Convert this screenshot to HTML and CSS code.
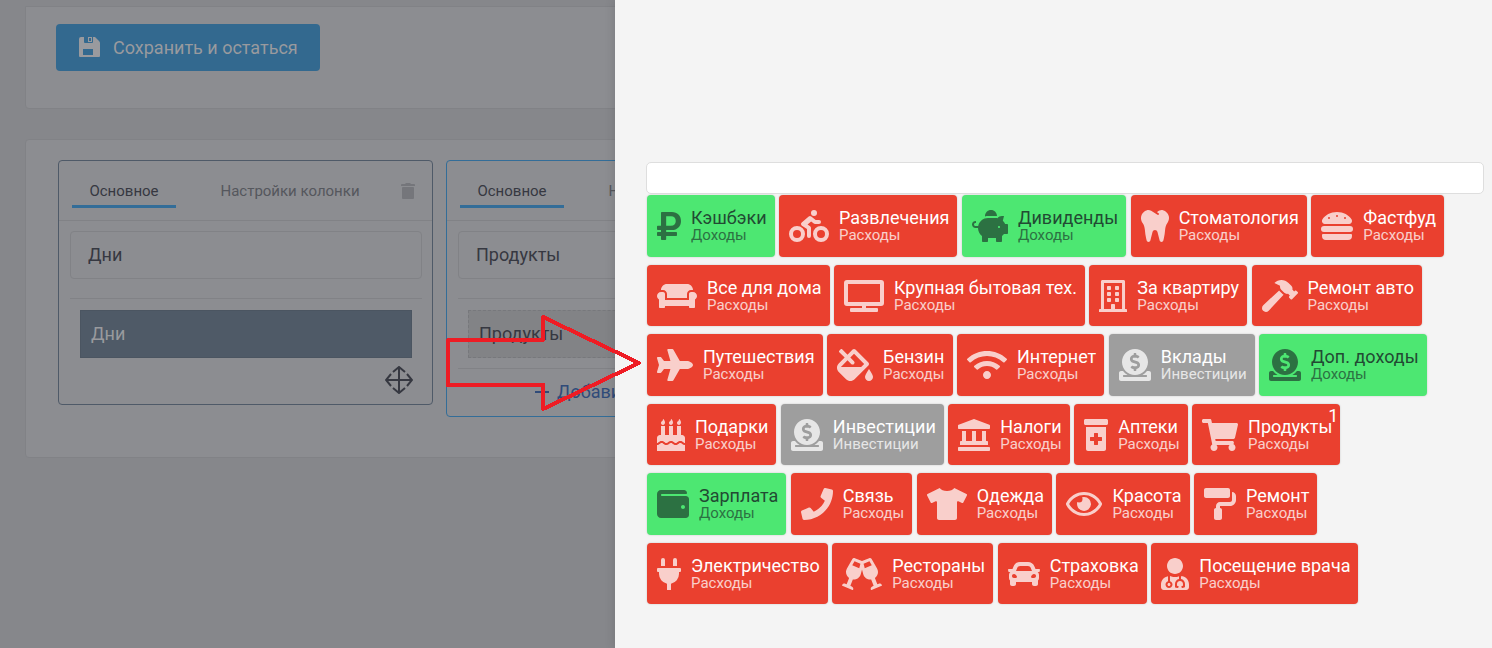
FILE: index.html
```html
<!DOCTYPE html>
<html lang="ru">
<head>
<meta charset="utf-8">
<meta name="viewport" content="width=device-width, initial-scale=1">
<title>Настройки</title>
<link rel="stylesheet" href="styles.css">
</head>
<body>
<main class="page">
  <section class="card card-actions">
    <button type="button" class="save">
      <svg class="save-icon" viewBox="0 0 21 21" aria-hidden="true"><path fill-rule="evenodd" d="M2 0h3v5q0 1 1 1h7q1 0 1-1V0h2l4 4q1 1 1 2v13q0 1-1 1H1q-1 0-1-1V2Q0 0 2 0zM4 12v6h10v-6zM9 0h4v5H9zM10 1v3h2V1z"/></svg>
      Сохранить и остаться
    </button>
  </section>

  <section class="card board">
    <article class="column">
      <div class="tabs">
        <button type="button" class="tab tab-active">Основное</button>
        <button type="button" class="tab tab-wide">Настройки колонки</button>
        <button type="button" class="trash" aria-label="Удалить"><svg viewBox="0 0 14 16" aria-hidden="true"><path d="M0 2q0-1 1-1h3l1-1h4l1 1h3q1 0 1 1v1H0zM2 4h10q1 0 1 1v10q0 1-1 1H2q-1 0-1-1V5q0-1 1-1z"/></svg></button>
      </div>
      <div class="column-body">
        <input class="name" type="text" value="Дни" aria-label="Название колонки">
        <div class="items"><div class="item item-dark">Дни</div></div>
        <div class="mover"><svg viewBox="0 0 28 28" aria-hidden="true"><path d="M14 1v26M1 14h26M8 6l6-5 6 5M8 22l6 5 6-5M6 8l-5 6 5 6M22 8l5 6-5 6"/></svg></div>
      </div>
    </article>
    <article class="column column-blue">
      <div class="tabs">
        <button type="button" class="tab tab-active">Основное</button>
        <button type="button" class="tab tab-wide">Настройки колонки</button>
      </div>
      <div class="column-body">
        <input class="name" type="text" value="Продукты" aria-label="Название колонки">
        <div class="items"><div class="item item-light">Продукты</div></div>
        <button type="button" class="add"><svg viewBox="0 0 14 14" aria-hidden="true"><path d="M7 0v14M0 7h14"/></svg>Добавить</button>
      </div>
    </article>
  </section>
</main>

<aside class="drawer">
  <input class="search" type="text" aria-label="Поиск">
  <div class="tiles">
    <button type="button" class="tile income"><svg viewBox="0 0 384 512" width="24" height="32"><path d="M239.36 320C324.48 320 384 260.542 384 175.071S324.48 32 239.36 32H76c-6.627 0-12 5.373-12 12v206.632H12c-6.627 0-12 5.373-12 12V308c0 6.627 5.373 12 12 12h52v32H12c-6.627 0-12 5.373-12 12v40c0 6.627 5.373 12 12 12h52v52c0 6.627 5.373 12 12 12h58.56c6.627 0 12-5.373 12-12v-52H308c6.627 0 12-5.373 12-12v-40c0-6.627-5.373-12-12-12H146.56v-32h92.8zm-92.8-219.252h78.72c46.72 0 74.88 29.11 74.88 74.323 0 45.832-28.16 75.561-76.16 75.561h-77.44V100.748z"/></svg><span class="label"><span class="title">Кэшбэки</span><span class="kind">Доходы</span></span></button>
    <button type="button" class="tile"><svg viewBox="0 0 640 512" width="40" height="32"><path d="M400 96a48 48 0 1 0-48-48 48 48 0 0 0 48 48zm-4 121a31.9 31.9 0 0 0 20 7h64a32 32 0 0 0 0-64h-52.78L356 103a31.94 31.94 0 0 0-40.81.68l-112 96a32 32 0 0 0 3.08 50.92L288 305.12V416a32 32 0 0 0 64 0V288a32 32 0 0 0-14.25-26.62l-41.36-27.57 58.25-49.92zm116 39a128 128 0 1 0 128 128 128 128 0 0 0-128-128zm0 192a64 64 0 1 1 64-64 64 64 0 0 1-64 64zM128 256a128 128 0 1 0 128 128 128 128 0 0 0-128-128zm0 192a64 64 0 1 1 64-64 64 64 0 0 1-64 64z"/></svg><span class="label"><span class="title">Развлечения</span><span class="kind">Расходы</span></span></button>
    <button type="button" class="tile income"><svg viewBox="0 0 576 512" width="36" height="32"><path d="M560 224h-29.5c-8.8-20-21.6-37.7-37.4-52.5L512 96h-32c-29.4 0-55.4 13.5-73 34.3-7.6-1.1-15.1-2.3-23-2.3H256c-77.4 0-141.9 55-156.8 128H56c-14.8 0-26.5-13.5-23.5-28.8C34.7 215.8 45.4 208 57 208h1c3.3 0 6-2.7 6-6v-20c0-3.3-2.7-6-6-6-28.5 0-53.9 20.4-57.5 48.6C-3.9 258.8 22.7 288 56 288h40c0 52.2 25.4 98.1 64 127.3V496c0 8.8 7.2 16 16 16h64c8.8 0 16-7.2 16-16v-48h128v48c0 8.8 7.2 16 16 16h64c8.8 0 16-7.2 16-16v-80.7c11.8-8.9 22.3-19.4 31.3-31.3H560c8.8 0 16-7.2 16-16V240c0-8.8-7.2-16-16-16zm-128 64c-8.8 0-16-7.2-16-16s7.2-16 16-16 16 7.2 16 16-7.2 16-16 16zM256 96h128c5.4 0 10.7.4 15.9.8 0-.3.1-.5.1-.8 0-53-43-96-96-96s-96 43-96 96c0 2.1.5 4.1.6 6.2 15.2-3.9 31-6.2 47.4-6.2z"/></svg><span class="label"><span class="title">Дивиденды</span><span class="kind">Доходы</span></span></button>
    <button type="button" class="tile"><svg viewBox="0 0 448 512" width="28" height="32"><path d="M443.98 96.25c-11.01-45.22-47.11-82.06-92.01-93.72-32.19-8.36-63 5.1-89.14 24.33-3.25 2.39-6.96 3.73-10.5 5.48l28.32 18.21c7.42 4.77 9.58 14.67 4.8 22.11-4.46 6.95-14.27 9.86-22.11 4.8L162.83 12.84c-20.7-10.85-43.38-16.4-66.81-10.31-44.9 11.67-81 48.5-92.01 93.72-10.13 41.62-.42 80.81 21.5 110.43 23.36 31.57 32.68 68.66 36.29 107.35 4.4 47.16 10.33 94.16 20.94 140.32l7.8 33.95c3.19 13.87 15.49 23.7 29.67 23.7 13.97 0 26.15-9.55 29.54-23.16l34.47-138.42c4.56-18.32 20.96-31.16 39.76-31.16s35.2 12.85 39.76 31.16l34.47 138.42c3.39 13.61 15.57 23.16 29.54 23.16 14.18 0 26.48-9.83 29.67-23.7l7.8-33.95c10.61-46.15 16.53-93.16 20.94-140.32 3.61-38.7 12.93-75.78 36.29-107.35 21.95-29.61 31.66-68.8 21.53-110.43z"/></svg><span class="label"><span class="title">Стоматология</span><span class="kind">Расходы</span></span></button>
    <button type="button" class="tile"><svg viewBox="0 0 512 512" width="32" height="32"><path d="M464 256H48a48 48 0 0 0 0 96h416a48 48 0 0 0 0-96zm16 128H32a16 16 0 0 0-16 16v16a64 64 0 0 0 64 64h352a64 64 0 0 0 64-64v-16a16 16 0 0 0-16-16zM58.64 224h394.72c34.57 0 54.62-43.9 34.82-75.88C448 83.2 359.55 32.1 256 32c-103.54.1-192 51.2-232.18 116.11C4 180.09 24.07 224 58.64 224zM384 112a16 16 0 1 1-16 16 16 16 0 0 1 16-16zM256 80a16 16 0 1 1-16 16 16 16 0 0 1 16-16zm-128 32a16 16 0 1 1-16 16 16 16 0 0 1 16-16z"/></svg><span class="label"><span class="title">Фастфуд</span><span class="kind">Расходы</span></span></button>
    <button type="button" class="tile"><svg viewBox="0 0 640 512" width="40" height="32"><path d="M160 224v64h320v-64c0-35.3 28.7-64 64-64h32c0-53-43-96-96-96H160c-53 0-96 43-96 96h32c35.3 0 64 28.7 64 64zm416-32h-32c-17.7 0-32 14.3-32 32v96H128v-96c0-17.7-14.3-32-32-32H64c-35.3 0-64 28.7-64 64 0 23.6 13 44 32 55.1V432c0 8.8 7.2 16 16 16h64c8.8 0 16-7.2 16-16v-16h384v16c0 8.8 7.2 16 16 16h64c8.8 0 16-7.2 16-16V311.1c19-11.1 32-31.5 32-55.1 0-35.3-28.7-64-64-64z"/></svg><span class="label"><span class="title">Все для дома</span><span class="kind">Расходы</span></span></button>
    <button type="button" class="tile"><svg viewBox="0 0 640 512" width="40" height="32"><path d="M592 0H48A48 48 0 0 0 0 48v320a48 48 0 0 0 48 48h240v32H112a16 16 0 0 0-16 16v32a16 16 0 0 0 16 16h416a16 16 0 0 0 16-16v-32a16 16 0 0 0-16-16H352v-32h240a48 48 0 0 0 48-48V48a48 48 0 0 0-48-48zm-16 352H64V64h512z"/></svg><span class="label"><span class="title">Крупная бытовая тех.</span><span class="kind">Расходы</span></span></button>
    <button type="button" class="tile"><svg viewBox="0 0 448 512" width="28" height="32"><path d="M128 148v-40c0-6.6 5.4-12 12-12h40c6.6 0 12 5.4 12 12v40c0 6.6-5.4 12-12 12h-40c-6.6 0-12-5.4-12-12zm140 12h40c6.6 0 12-5.4 12-12v-40c0-6.6-5.4-12-12-12h-40c-6.6 0-12 5.4-12 12v40c0 6.6 5.4 12 12 12zm-128 96h40c6.6 0 12-5.4 12-12v-40c0-6.6-5.4-12-12-12h-40c-6.6 0-12 5.4-12 12v40c0 6.6 5.4 12 12 12zm128 0h40c6.6 0 12-5.4 12-12v-40c0-6.6-5.4-12-12-12h-40c-6.6 0-12 5.4-12 12v40c0 6.6 5.4 12 12 12zm-76 84v-40c0-6.6-5.4-12-12-12h-40c-6.6 0-12 5.4-12 12v40c0 6.6 5.4 12 12 12h40c6.6 0 12-5.4 12-12zm76 12h40c6.6 0 12-5.4 12-12v-40c0-6.6-5.4-12-12-12h-40c-6.6 0-12 5.4-12 12v40c0 6.6 5.4 12 12 12zm180 124v36H0v-36c0-6.6 5.4-12 12-12h19.5V24c0-13.3 10.7-24 24-24h337c13.3 0 24 10.7 24 24v440H436c6.6 0 12 5.4 12 12zM79.5 463H192v-67c0-6.6 5.4-12 12-12h40c6.6 0 12 5.4 12 12v67h112.5V49L80 48l-.5 415z"/></svg><span class="label"><span class="title">За квартиру</span><span class="kind">Расходы</span></span></button>
    <button type="button" class="tile"><svg viewBox="0 0 576 512" width="36" height="32"><path d="M571.31 193.94l-22.63-22.63c-6.25-6.25-16.38-6.25-22.63 0l-11.31 11.31-28.9-28.9c5.63-21.31.36-44.9-16.35-61.61l-45.25-45.25c-62.48-62.48-163.79-62.48-226.28 0l90.51 45.25v18.75c0 16.97 6.74 33.25 18.75 45.25l49.14 49.14c16.71 16.71 40.3 21.98 61.61 16.35l28.9 28.9-11.31 11.31c-6.25 6.25-6.25 16.38 0 22.63l22.63 22.63c6.25 6.25 16.38 6.25 22.63 0l90.51-90.51c6.23-6.24 6.23-16.37-.02-22.62zm-286.72-15.2c-3.7-3.7-6.84-7.79-9.85-11.95L19.64 404.96c-25.57 23.88-26.26 64.19-1.53 88.93s65.05 24.05 88.92-1.53l238.13-255.07c-3.96-2.91-7.9-5.87-11.44-9.41l-49.13-49.14z"/></svg><span class="label"><span class="title">Ремонт авто</span><span class="kind">Расходы</span></span></button>
    <button type="button" class="tile"><svg viewBox="0 0 576 512" width="36" height="32"><path d="M480 192H365.71L260.61 8.06A16.014 16.014 0 0 0 246.71 0h-65.5c-10.63 0-18.3 10.17-15.38 20.39L214.86 192H112l-43.2-57.6c-3.02-4.03-7.77-6.4-12.8-6.4H16.01C5.6 128-2.04 137.78.49 147.88L32 256 .49 364.12C-2.04 374.22 5.6 384 16.01 384H56c5.04 0 9.78-2.37 12.8-6.4L112 320h102.86l-49.03 171.6c-2.92 10.22 4.75 20.4 15.38 20.4h65.5c5.74 0 11.04-3.08 13.89-8.06L365.71 320H480c35.35 0 96-28.65 96-64s-60.65-64-96-64z"/></svg><span class="label"><span class="title">Путешествия</span><span class="kind">Расходы</span></span></button>
    <button type="button" class="tile"><svg viewBox="0 0 576 512" width="36" height="32"><path d="M512 320s-64 92.65-64 128c0 35.35 28.66 64 64 64s64-28.65 64-64-64-128-64-128zm-9.37-102.94L294.94 9.37C288.69 3.12 280.5 0 272.31 0s-16.38 3.12-22.62 9.37l-81.58 81.58L81.93 4.76c-6.25-6.25-16.38-6.25-22.62 0L36.69 27.38c-6.24 6.25-6.24 16.38 0 22.62l86.19 86.18-94.76 94.76c-37.49 37.48-37.49 98.26 0 135.75l117.19 117.19c18.74 18.74 43.31 28.12 67.87 28.12 24.57 0 49.13-9.37 67.87-28.12l221.57-221.57c12.5-12.5 12.5-32.75.01-45.25zm-116.22 70.97H65.93c1.36-3.84 3.57-7.98 7.43-11.83l13.15-13.15 81.61-81.61 58.6 58.6c12.49 12.49 32.75 12.49 45.24 0s12.49-32.75 0-45.24l-58.6-58.6 58.95-58.95 162.44 162.44-48.34 48.34z"/></svg><span class="label"><span class="title">Бензин</span><span class="kind">Расходы</span></span></button>
    <button type="button" class="tile"><svg viewBox="0 0 640 512" width="40" height="32"><path d="M634.91 154.88C457.74-8.99 182.19-8.93 5.09 154.88c-6.66 6.16-6.79 16.59-.35 22.98l34.24 33.97c6.14 6.1 16.02 6.23 22.4.38 145.92-133.68 371.3-133.71 517.25 0 6.38 5.85 16.26 5.71 22.4-.38l34.24-33.97c6.43-6.39 6.3-16.82-.36-22.98zM320 352c-35.35 0-64 28.65-64 64s28.65 64 64 64 64-28.65 64-64-28.65-64-64-64zm202.67-83.59c-115.26-101.93-290.21-101.82-405.34 0-6.9 6.1-7.12 16.69-.57 23.15l34.44 33.99c6 5.92 15.66 6.32 22.05.8 83.95-72.57 209.74-72.41 293.49 0 6.39 5.52 16.05 5.13 22.05-.8l34.44-33.99c6.56-6.46 6.33-17.06-.56-23.15z"/></svg><span class="label"><span class="title">Интернет</span><span class="kind">Расходы</span></span></button>
    <button type="button" class="tile invest"><svg viewBox="0 0 512 512" width="32" height="32"><path id="coin" d="M256 416c114.9 0 208-93.1 208-208S370.9 0 256 0 48 93.1 48 208s93.1 208 208 208zM233.8 97.4V80.6c0-9.2 7.4-16.6 16.6-16.6h11.1c9.2 0 16.6 7.4 16.6 16.6v17c15.5.8 30.5 6.1 43 15.4 5.6 4.1 6.2 12.3 1.2 17.1L306 145.6c-3.8 3.7-9.5 3.8-14 1-5.4-3.4-11.4-5.1-17.8-5.1h-38.9c-9 0-16.3 8.2-16.3 18.3 0 8.2 5 15.5 12.1 17.6l62.3 18.7c25.7 7.7 43.7 32.4 43.7 60.1 0 34-26.4 61.5-59.1 62.4v16.8c0 9.2-7.4 16.6-16.6 16.6h-11.1c-9.2 0-16.6-7.4-16.6-16.6v-17c-15.5-.8-30.5-6.1-43-15.4-5.6-4.1-6.2-12.3-1.2-17.1l16.3-15.5c3.8-3.7 9.5-3.8 14-1 5.4 3.4 11.4 5.1 17.8 5.1h38.9c9 0 16.3-8.2 16.3-18.3 0-8.2-5-15.5-12.1-17.6l-62.3-18.7c-25.7-7.7-43.7-32.4-43.7-60.1.1-34 26.4-61.5 59.1-62.4zM480 352h-32.5c-19.6 26-44.6 47.7-73 64h63.8c5.3 0 9.6 3.6 9.6 8v16c0 4.4-4.3 8-9.6 8H73.6c-5.3 0-9.6-3.6-9.6-8v-16c0-4.4 4.3-8 9.6-8h63.8c-28.4-16.3-53.3-38-73-64H32c-17.7 0-32 14.3-32 32v96c0 17.7 14.3 32 32 32h448c17.7 0 32-14.3 32-32v-96c0-17.7-14.3-32-32-32z"/></svg><span class="label"><span class="title">Вклады</span><span class="kind">Инвестиции</span></span></button>
    <button type="button" class="tile income"><svg viewBox="0 0 512 512" width="32" height="32"><use href="#coin"/></svg><span class="label"><span class="title">Доп. доходы</span><span class="kind">Доходы</span></span></button>
    <button type="button" class="tile"><svg viewBox="0 0 448 512" width="28" height="32"><path d="M448 384c-28.02 0-31.26-32-74.5-32-43.43 0-46.825 32-74.75 32-27.695 0-31.454-32-74.75-32-42.842 0-47.218 32-74.5 32-28.148 0-31.202-32-74.75-32-43.547 0-46.653 32-74.75 32v-80c0-26.5 21.5-48 48-48h16V112h64v144h64V112h64v144h64V112h64v144h16c26.5 0 48 21.5 48 48v80zm0 128H0v-96c43.356 0 46.767-32 74.75-32 27.951 0 31.253 32 74.75 32 42.843 0 47.217-32 74.5-32 28.148 0 31.201 32 74.75 32 43.357 0 46.767-32 74.75-32 27.488 0 31.252 32 74.5 32v96zM96 96c-17.75 0-32-14.25-32-32 0-31 32-23 32-64 12 0 32 29.5 32 56s-14.25 40-32 40zm128 0c-17.75 0-32-14.25-32-32 0-31 32-23 32-64 12 0 32 29.5 32 56s-14.25 40-32 40zm128 0c-17.75 0-32-14.25-32-32 0-31 32-23 32-64 12 0 32 29.5 32 56s-14.25 40-32 40z"/></svg><span class="label"><span class="title">Подарки</span><span class="kind">Расходы</span></span></button>
    <button type="button" class="tile invest"><svg viewBox="0 0 512 512" width="32" height="32"><use href="#coin"/></svg><span class="label"><span class="title">Инвестиции</span><span class="kind">Инвестиции</span></span></button>
    <button type="button" class="tile"><svg viewBox="0 0 512 512" width="32" height="32"><path d="M501.62 92.11L267.24 2.04a31.958 31.958 0 0 0-22.47 0L10.38 92.11A16.001 16.001 0 0 0 0 107.09V144c0 8.84 7.16 16 16 16h480c8.84 0 16-7.16 16-16v-36.91c0-6.67-4.14-12.64-10.38-14.98zM64 192v160H48c-8.84 0-16 7.16-16 16v48h448v-48c0-8.84-7.16-16-16-16h-16V192h-64v160h-96V192h-64v160h-96V192H64zm432 256H16c-8.84 0-16 7.16-16 16v32c0 8.84 7.16 16 16 16h480c8.84 0 16-7.16 16-16v-32c0-8.84-7.16-16-16-16z"/></svg><span class="label"><span class="title">Налоги</span><span class="kind">Расходы</span></span></button>
    <button type="button" class="tile"><svg viewBox="0 0 384 512" width="24" height="32"><path d="M360 0H24C10.8 0 0 10.8 0 24v48c0 13.2 10.8 24 24 24h336c13.2 0 24-10.8 24-24V24c0-13.2-10.8-24-24-24zM32 480c0 17.6 14.4 32 32 32h256c17.6 0 32-14.4 32-32V128H32v352zm64-184c0-4.4 3.6-8 8-8h56v-56c0-4.4 3.6-8 8-8h48c4.4 0 8 3.6 8 8v56h56c4.4 0 8 3.6 8 8v48c0 4.4-3.6 8-8 8h-56v56c0 4.4-3.6 8-8 8h-48c-4.4 0-8-3.6-8-8v-56h-56c-4.4 0-8-3.6-8-8v-48z"/></svg><span class="label"><span class="title">Аптеки</span><span class="kind">Расходы</span></span></button>
    <button type="button" class="tile"><svg viewBox="0 0 576 512" width="36" height="32"><path d="M528.12 301.319l47.273-208C578.806 78.301 567.391 64 551.99 64H159.208l-9.166-44.81C147.758 8.021 137.93 0 126.529 0H24C10.745 0 0 10.745 0 24v16c0 13.255 10.745 24 24 24h69.883l70.248 343.435C147.325 417.1 136 435.222 136 456c0 30.928 25.072 56 56 56s56-25.072 56-56c0-15.674-6.447-29.835-16.824-40h209.647C430.447 426.165 424 440.326 424 456c0 30.928 25.072 56 56 56s56-25.072 56-56c0-22.172-12.888-41.332-31.579-50.405l5.517-24.276c3.413-15.018-8.002-29.319-23.403-29.319H218.117l-6.545-32h293.145c11.206 0 20.92-7.754 23.403-18.681z"/></svg><span class="label"><span class="title">Продукты</span><span class="kind">Расходы</span></span><span class="badge">1</span></button>
    <button type="button" class="tile income"><svg viewBox="0 0 512 512" width="32" height="32"><path d="M461.2 128H80c-8.84 0-16-7.16-16-16s7.16-16 16-16h384c8.84 0 16-7.16 16-16 0-26.51-21.49-48-48-48H64C28.65 32 0 60.65 0 96v320c0 35.35 28.65 64 64 64h397.2c28.02 0 50.8-21.53 50.8-48V176c0-26.47-22.78-48-50.8-48zM416 336c-17.67 0-32-14.33-32-32s14.33-32 32-32 32 14.33 32 32-14.33 32-32 32z"/></svg><span class="label"><span class="title">Зарплата</span><span class="kind">Доходы</span></span></button>
    <button type="button" class="tile"><svg viewBox="0 0 512 512" width="32" height="32"><path d="M493.4 24.6l-104-24c-11.3-2.6-22.9 3.3-27.5 13.9l-48 112c-4.2 9.8-1.4 21.3 6.9 28l60.6 49.6c-36 76.7-98.9 140.5-177.2 177.2l-49.6-60.6c-6.8-8.3-18.2-11.1-28-6.9l-112 48C3.9 366.5-2 378.1.6 389.4l24 104C27.1 504.2 36.7 512 48 512c256.1 0 464-207.5 464-464 0-11.2-7.7-20.9-18.6-23.4z"/></svg><span class="label"><span class="title">Связь</span><span class="kind">Расходы</span></span></button>
    <button type="button" class="tile"><svg viewBox="0 0 640 512" width="40" height="32"><path d="M631.2 96.5L436.5 0C416.4 27.8 371.9 47.2 320 47.2S223.6 27.8 203.5 0L8.8 96.5c-7.9 4-11.1 13.6-7.2 21.5l57.2 114.5c4 7.9 13.6 11.1 21.5 7.2l56.6-27.7c10.6-5.2 23 2.5 23 14.4V480c0 17.7 14.3 32 32 32h256c17.7 0 32-14.3 32-32V226.3c0-11.8 12.4-19.6 23-14.4l56.6 27.7c8 4 17.5.8 21.5-7.2L638.3 118c4-7.9.8-17.6-7.1-21.5z"/></svg><span class="label"><span class="title">Одежда</span><span class="kind">Расходы</span></span></button>
    <button type="button" class="tile"><svg viewBox="0 0 576 512" width="36" height="32"><path d="M288 144a110.94 110.94 0 0 0-31.24 5 55.4 55.4 0 0 1 7.24 27 56 56 0 0 1-56 56 55.4 55.4 0 0 1-27-7.24A111.71 111.71 0 1 0 288 144zm284.52 97.4C518.29 135.59 410.93 64 288 64S57.68 135.64 3.48 241.41a32.35 32.35 0 0 0 0 29.19C57.71 376.41 165.07 448 288 448s230.32-71.64 284.52-177.41a32.35 32.35 0 0 0 0-29.19zM288 400c-98.65 0-189.09-55-237.93-144C98.91 167 189.34 112 288 112s189.09 55 237.93 144C477.1 345 386.66 400 288 400z"/></svg><span class="label"><span class="title">Красота</span><span class="kind">Расходы</span></span></button>
    <button type="button" class="tile"><svg viewBox="0 0 512 512" width="32" height="32"><path d="M416 128V32c0-17.67-14.33-32-32-32H32C14.33 0 0 14.33 0 32v96c0 17.67 14.33 32 32 32h352c17.67 0 32-14.33 32-32zm32-64v128c0 17.67-14.33 32-32 32H256c-35.35 0-64 28.65-64 64v32c-17.67 0-32 14.33-32 32v128c0 17.67 14.33 32 32 32h64c17.67 0 32-14.33 32-32V352c0-17.67-14.33-32-32-32v-32h160c53.02 0 96-42.98 96-96v-64c0-35.35-28.65-64-64-64z"/></svg><span class="label"><span class="title">Ремонт</span><span class="kind">Расходы</span></span></button>
    <button type="button" class="tile"><svg viewBox="0 0 384 512" width="24" height="32"><path d="M320,32a32,32,0,0,0-64,0v96h64Zm48,128H16A16,16,0,0,0,0,176v32a16,16,0,0,0,16,16H32v32A160.07,160.07,0,0,0,160,412.8V512h64V412.8A160.07,160.07,0,0,0,352,256V224h16a16,16,0,0,0,16-16V176A16,16,0,0,0,368,160ZM128,32a32,32,0,0,0-64,0v96h64Z"/></svg><span class="label"><span class="title">Электричество</span><span class="kind">Расходы</span></span></button>
    <button type="button" class="tile"><svg viewBox="0 0 640 512" width="40" height="32"><path d="M639.4 433.6c-8.4-20.4-31.8-30.1-52.2-21.6l-22.1 9.2-38.7-101.9c47.9-35 64.8-100.3 34.5-152.8L474.3 16c-8-13.9-25.1-19.7-40-13.6L320 49.8 205.7 2.4c-14.9-6.2-32-.3-40 13.6L79.1 166.5C48.9 219 65.7 284.3 113.6 319.2L74.9 421.1l-22.1-9.2c-20.4-8.5-43.7 1.2-52.2 21.6-1.7 4.1.2 8.8 4.3 10.5l162.3 67.4c4.1 1.7 8.7-.2 10.4-4.3 8.4-20.4-1.2-43.8-21.6-52.3l-22.1-9.2L173.3 342c4.4.5 8.8 1.3 13.1 1.3 51.7 0 99.4-33.1 113.4-85.3l20.2-75.4 20.2 75.4c14 52.2 61.7 85.3 113.4 85.3 4.3 0 8.7-.8 13.1-1.3L506 445.6l-22.1 9.2c-20.4 8.5-30.1 31.9-21.6 52.3 1.7 4.1 6.4 6 10.4 4.3L635.1 444c4-1.7 6-6.3 4.3-10.4zM275.9 162.1l-112.1-46.5 36.5-63.4 94.5 39.2-18.9 70.7zm88.2 0l-18.9-70.7 94.5-39.2 36.5 63.4-112.1 46.5z"/></svg><span class="label"><span class="title">Рестораны</span><span class="kind">Расходы</span></span></button>
    <button type="button" class="tile"><svg viewBox="0 0 512 512" width="32" height="32"><path d="M499.99 176h-59.87l-16.64-41.6C406.38 91.63 365.57 64 319.5 64h-127c-46.06 0-86.88 27.63-103.99 70.4L71.87 176H12.01C4.2 176-1.53 183.34.37 190.91l6 24C7.7 220.25 12.5 224 18.01 224h20.07C24.65 235.73 16 252.78 16 272v48c0 16.12 6.16 30.67 16 41.93V416c0 17.67 14.33 32 32 32h32c17.67 0 32-14.33 32-32v-32h256v32c0 17.67 14.33 32 32 32h32c17.67 0 32-14.33 32-32v-54.07c9.84-11.25 16-25.8 16-41.93v-48c0-19.22-8.65-36.27-22.07-48H494c5.51 0 10.31-3.75 11.64-9.09l6-24c1.89-7.57-3.84-14.91-11.65-14.91zm-352.06-17.83c7.29-18.22 24.94-30.17 44.57-30.17h127c19.63 0 37.28 11.95 44.57 30.17L384 208H128l19.93-49.83zM96 319.8c-19.2 0-32-12.76-32-31.9S76.8 256 96 256s48 28.71 48 47.85-28.8 15.95-48 15.95zm320 0c-19.2 0-48 3.19-48-15.95S396.8 256 416 256s32 12.76 32 31.9-12.8 31.9-32 31.9z"/></svg><span class="label"><span class="title">Страховка</span><span class="kind">Расходы</span></span></button>
    <button type="button" class="tile"><svg viewBox="0 0 448 512" width="28" height="32"><path d="M224 256c70.7 0 128-57.3 128-128S294.7 0 224 0 96 57.3 96 128s57.3 128 128 128zM104 424c0 13.3 10.7 24 24 24s24-10.7 24-24-10.7-24-24-24-24 10.7-24 24zm216-135.4v49c36.5 7.4 64 39.8 64 78.4v41.7c0 7.6-5.4 14.2-12.9 15.7l-32.2 6.4c-4.3.9-8.5-1.9-9.4-6.3l-3.1-15.7c-.9-4.3 1.9-8.6 6.3-9.4l19.3-3.9V416c0-62.8-96-65.1-96 1.9v26.7l19.3 3.9c4.3.9 7.1 5.1 6.3 9.4l-3.1 15.7c-.9 4.3-5.1 7.1-9.4 6.3l-31.2-4.2c-7.9-1.1-13.8-7.8-13.8-15.9V416c0-38.6 27.5-70.9 64-78.4v-45.2c-2.2.7-4.4 1.1-6.6 1.9-18 6.3-37.3 9.8-57.4 9.8s-39.4-3.5-57.4-9.8c-7.4-2.6-14.9-4.2-22.6-5.2v81.6c23.1 6.9 40 28.1 40 53.4 0 30.9-25.1 56-56 56s-56-25.1-56-56c0-25.3 16.9-46.5 40-53.4v-80.4C48.5 301 0 355.8 0 422.4v44.8C0 491.9 20.1 512 44.8 512h358.4c24.7 0 44.8-20.1 44.8-44.8v-44.8c0-72-56.8-130.3-128-133.8z"/></svg><span class="label"><span class="title">Посещение врача</span><span class="kind">Расходы</span></span></button>
  </div>
</aside>

<svg class="pointer" viewBox="446 314 196 98" aria-hidden="true"><path d="M448 340h95v-23l96 46-96 46v-24h-95z"/></svg>
</body>
</html>
```
FILE: styles.css
```css
* { box-sizing: border-box; }

body {
  margin: 0;
  min-height: 100vh;
  overflow: hidden;
  position: relative;
  background: #86878b;
  color: #363841;
  font-family: Roboto, "Noto Sans", sans-serif;
  font-size: 18px;
}

button, input { font: inherit; color: inherit; margin: 0; }
button { border: 0; padding: 0; background: none; cursor: pointer; }

.page { padding-left: 25px; }

.card {
  background: #8c8d91;
  border: 1px solid #818286;
  border-radius: 4px;
}

.card-actions {
  margin-top: 6px;
  padding: 17px 30px 37px;
  border-radius: 0 0 4px 4px;
}

.save {
  display: flex;
  align-items: center;
  gap: 13px;
  height: 47px;
  padding: 0 22px 0 23px;
  border-radius: 4px;
  background: #33698f;
  color: #999a9e;
}
.save-icon { width: 21px; height: 21px; fill: #999a9e; }

.board {
  display: flex;
  align-items: flex-start;
  gap: 13px;
  margin-top: 30px;
  padding: 20px 32px 40px;
}

.column {
  flex: 0 0 375px;
  border: 1px solid #4f5a68;
  border-radius: 4px;
}
.column-blue { border-color: #336d98; }

.tabs {
  display: flex;
  align-items: center;
  height: 60px;
  padding: 0 17px 0 13px;
  border-bottom: 1px solid #818286;
  font-size: 15px;
}
.tab {
  height: 34px;
  width: 104px;
  padding-top: 3px;
  border-bottom: 3px solid transparent;
  color: #55575d;
}
.tab-active { border-bottom-color: #336d98; color: #363841; }
.tab-wide { flex: 1; padding-left: 3px; }
.trash { width: 14px; height: 16px; }
.trash svg { display: block; fill: #75767b; }

.column-blue .tabs { padding-right: 31px; }

.column-body { padding: 10px; padding-left: 11px; }

.name {
  display: block;
  width: 100%;
  height: 48px;
  padding: 0 17px 2px;
  border: 1px solid #818286;
  border-radius: 4px;
  background: transparent;
}

.items {
  margin-top: 19px;
  padding: 11px 10px 0;
  border-top: 1px solid #818286;
}
.item {
  display: flex;
  align-items: center;
  height: 48px;
  padding: 0 10px 2px;
  border: 1px solid #4b5561;
}
.item-dark { background: #4f5a67; color: #999a9e; }
.item-light { background: #828386; border: 1px dashed #77787c; }

.mover {
  display: flex;
  justify-content: flex-end;
  padding: 8px 9px 0;
}
.mover svg {
  width: 28px;
  height: 28px;
  fill: none;
  stroke: #363841;
  stroke-width: 2;
}

.add {
  display: flex;
  align-items: center;
  gap: 8px;
  width: 100%;
  height: 38px;
  margin-top: 10px;
  padding: 8px 0 0 77px;
  border-top: 1px solid #818286;
  color: #304b79;
}
.add svg { width: 14px; height: 14px; stroke: #304b79; stroke-width: 2; }

.drawer {
  position: absolute;
  top: 0;
  right: 0;
  bottom: 0;
  left: 615px;
  padding: 162px 8px 0 31px;
  background: #f4f4f4;
  box-shadow: 0 0 10px rgba(0, 0, 0, 0.15);
}

.search {
  display: block;
  width: 100%;
  height: 32px;
  padding: 0 10px;
  border: 1px solid #dedede;
  border-radius: 5px;
  background: #fff;
}

.tiles { padding: 1px 8px 0 1px; }

.tile {
  position: relative;
  display: inline-flex;
  align-items: center;
  gap: 10px;
  margin-bottom: 8px;
  padding: 14px 8px 13px 10px;
  vertical-align: top;
  border-radius: 4px;
  background: #ea402f;
  box-shadow: 0 0 2px rgba(0, 0, 0, 0.2);
  color: #fff;
  text-align: left;
}
.tile svg { flex: none; fill: currentColor; opacity: 0.75; }
.income { background: #4de772; color: #224a33; }
.invest { background: #9e9e9e; }

.label { display: flex; flex-direction: column; }
.title { line-height: 18px; }
.kind { font-size: 15px; line-height: 1.1; opacity: 0.75; }

.badge {
  position: absolute;
  top: 2px;
  right: 2px;
  line-height: 20px;
}

.pointer {
  position: absolute;
  top: 314px;
  left: 446px;
  width: 196px;
  height: 98px;
  fill: none;
  stroke: #ee1c24;
  stroke-width: 4;
  stroke-linejoin: round;
  shape-rendering: crispEdges;
}
```
